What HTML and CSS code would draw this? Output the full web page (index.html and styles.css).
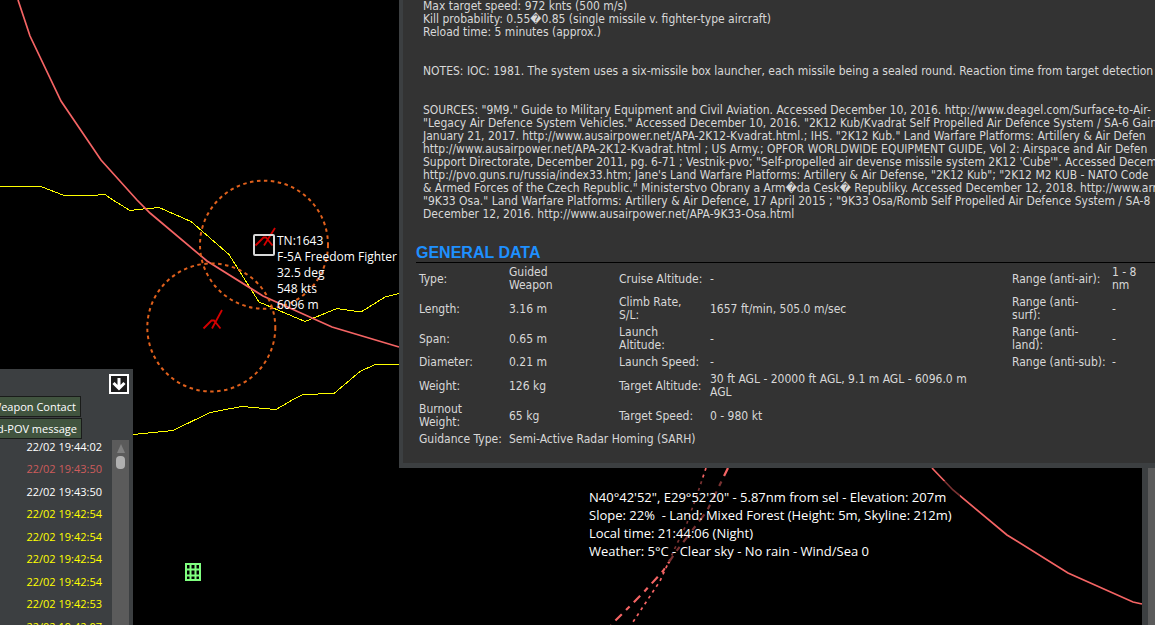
FILE: index.html
```html
<!DOCTYPE html>
<html lang="en">
<head>
<meta charset="utf-8">
<title>Tactical map</title>
<link rel="stylesheet" href="styles.css">
</head>
<body>
<main class="map">
  <svg class="chart" width="1155" height="625" viewBox="0 0 1155 625" aria-hidden="true">
    <g class="coast">
      <polyline points="0,186.5 41,186.5 64,195.5 91,195.5 105,194.5 113,200 130,210.5 143,209 159,207.5 191,221.5 229,254.5 259,302 305,321.5 337,308.5 361,312 385,297 399,293.5"/>
      <polyline points="133,434.5 173,430.5 209,413 220,410.5 242,406.5 276,409.5 294,399 303,394.5 334,393.5 360,371.5 375,364.5 399,364.5"/>
    </g>
    <g class="range">
      <polyline points="18,0 30,36 61,101 101,160 137,200 150,213 207,261 263,296 332,327 399,347"/>
      <polyline points="932,468 953,490 1007,535 1068,573 1133,602 1142,604"/>
      <polyline class="dash-long" points="728,468 707,511 675,553 663,571 643,593 611,625"/>
      <polyline class="dash-short" points="706,468 697,495 687,523 675,548 660,581 631,625"/>
    </g>
    <g class="ring">
      <circle cx="264" cy="244.7" r="64"/>
      <circle cx="211.300" cy="327.5" r="64"/>
    </g>
    <g class="launcher">
      <path d="M203.500 328.500L211.500 320.500H214L220.500 328.500M222 310L212 328.500"/>
      <path d="M255.500 245.500L263.500 237.500H266L272.500 245.500M275 228L264 245.500"/>
    </g>
    <rect class="select" x="254" y="235" width="20" height="20" rx="1"/>
    <path class="facility" d="M186 564H200V580H186ZM190.500 564V580M195.500 564V580M186 569.500H200M186 575.500H200"/>
  </svg>

  <div class="track">
    <div>TN:1643</div>
    <div>F-5A Freedom Fighter #1</div>
    <div>32.5 deg</div>
    <div>548 kts</div>
    <div>6096 m</div>
  </div>

  <div class="cursor-info">
    <div>N40°42'52", E29°52'20" - 5.87nm from sel - Elevation: 207m</div>
    <div>Slope: 22%&nbsp; - Land: Mixed Forest (Height: 5m, Skyline: 212m)</div>
    <div>Local time: 21:44:06 (Night)</div>
    <div>Weather: 5°C - Clear sky - No rain - Wind/Sea 0</div>
  </div>

  <div class="side-scroll"></div>

  <section class="log">
    <header class="log-head">
      <button class="collapse" type="button" aria-label="Collapse">
        <svg width="16" height="16" viewBox="0 0 16 16"><path d="M8 2V12M2.500 7L8 12.500L13.500 7"/></svg>
      </button>
    </header>
    <div class="filters">
      <button class="filter contact" type="button">Weapon Contact</button>
      <button class="filter" type="button">d-POV message</button>
    </div>
    <div class="log-body">
      <ul class="times">
        <li>22/02 19:44:02</li>
        <li class="alert">22/02 19:43:50</li>
        <li>22/02 19:43:50</li>
        <li class="notice">22/02 19:42:54</li>
        <li class="notice">22/02 19:42:54</li>
        <li class="notice">22/02 19:42:54</li>
        <li class="notice">22/02 19:42:54</li>
        <li class="notice">22/02 19:42:53</li>
        <li class="notice">22/02 19:42:07</li>
      </ul>
      <div class="scrollbar">
        <svg width="8" height="9" viewBox="0 0 8 9"><path d="M4 0L8 9H0Z"/></svg>
        <span class="thumb"></span>
      </div>
    </div>
  </section>

  <section class="database">
    <div class="notes">Max target speed: 972 knts (500 m/s)
Kill probability: 0.55&#xFFFD;0.85 (single missile v. fighter-type aircraft)
Reload time: 5 minutes (approx.)


NOTES: IOC: 1981. The system uses a six-missile box launcher, each missile being a sealed round. Reaction time from target detection


SOURCES: "9M9." Guide to Military Equipment and Civil Aviation. Accessed December 10, 2016. http://www.deagel.com/Surface-to-Air-
"Legacy Air Defence System Vehicles." Accessed December 10, 2016. "2K12 Kub/Kvadrat Self Propelled Air Defence System / SA-6 Gain
January 21, 2017. http://www.ausairpower.net/APA-2K12-Kvadrat.html.; IHS. "2K12 Kub." Land Warfare Platforms: Artillery &amp; Air Defen
http://www.ausairpower.net/APA-2K12-Kvadrat.html ; US Army.; OPFOR WORLDWIDE EQUIPMENT GUIDE, Vol 2: Airspace and Air Defen
Support Directorate, December 2011, pg. 6-71 ; Vestnik-pvo; "Self-propelled air devense missile system 2K12 'Cube'". Accessed Decem
http://pvo.guns.ru/russia/index33.htm; Jane's Land Warfare Platforms: Artillery &amp; Air Defense, "2K12 Kub"; "2K12 M2 KUB - NATO Code
&amp; Armed Forces of the Czech Republic." Ministerstvo Obrany a Arm&#xFFFD;da Cesk&#xFFFD; Republiky. Accessed December 12, 2018. http://www.arm
"9K33 Osa." Land Warfare Platforms: Artillery &amp; Air Defence, 17 April 2015 ; "9K33 Osa/Romb Self Propelled Air Defence System / SA-8
December 12, 2016. http://www.ausairpower.net/APA-9K33-Osa.html</div>
    <h2 class="heading">GENERAL DATA</h2>
    <table class="data">
      <colgroup><col class="c1"><col class="c2"><col class="c3"><col class="c4"><col class="c5"><col class="c6"></colgroup>
      <tbody>
        <tr><th>Type:</th><td>Guided<br>Weapon</td><th>Cruise Altitude:</th><td>-</td><th>Range (anti-air):</th><td>1 - 8<br>nm</td></tr>
        <tr><th>Length:</th><td>3.16 m</td><th>Climb Rate,<br>S/L:</th><td>1657 ft/min, 505.0 m/sec</td><th>Range (anti-<br>surf):</th><td>-</td></tr>
        <tr><th>Span:</th><td>0.65 m</td><th>Launch<br>Altitude:</th><td>-</td><th>Range (anti-<br>land):</th><td>-</td></tr>
        <tr><th>Diameter:</th><td>0.21 m</td><th>Launch Speed:</th><td>-</td><th>Range (anti-sub):</th><td>-</td></tr>
        <tr><th>Weight:</th><td>126 kg</td><th>Target Altitude:</th><td>30 ft AGL - 20000 ft AGL, 9.1 m AGL - 6096.0 m<br>AGL</td><th></th><td></td></tr>
        <tr><th>Burnout<br>Weight:</th><td>65 kg</td><th>Target Speed:</th><td>0 - 980 kt</td><th></th><td></td></tr>
        <tr><th>Guidance Type:</th><td colspan="5">Semi-Active Radar Homing (SARH)</td></tr>
      </tbody>
    </table>
  </section>
</main>
</body>
</html>
```
FILE: styles.css
```css
* { box-sizing: border-box; }

body {
  margin: 0;
  background: #000;
  color: #fff;
  font-family: "Open Sans", "Noto Sans", sans-serif;
}

.map {
  position: relative;
  min-height: 100vh;
  overflow: hidden;
}

/* Chart drawing */
.chart {
  display: block;
  fill: none;
}

.coast { stroke: #ffff00; stroke-width: 1; shape-rendering: crispEdges; }
.range { stroke: #f46464; stroke-width: 1.7; }
.dash-long { stroke-width: 2.2; stroke-dasharray: 9 6 5 6; }
.dash-short { stroke-dasharray: 3 4; }
.ring { stroke: #e0601c; stroke-width: 2; stroke-dasharray: 3.5 3.5; }
.launcher { stroke: #d40000; stroke-width: 1.8; }
.select { stroke: #d8d8d8; stroke-width: 2; }
.facility { stroke: #80ff80; stroke-width: 2; }

.track {
  position: absolute;
  left: 277px;
  top: 233px;
  font-size: 12px;
  line-height: 16px;
  white-space: nowrap;
}

.cursor-info {
  position: absolute;
  left: 584px;
  top: 481px;
  padding: 7px 8px 2px 5px;
  background: rgba(0, 0, 0, 0.5);
  font-size: 13px;
  line-height: 18px;
  white-space: nowrap;
}

.side-scroll {
  position: absolute;
  right: 0;
  top: 0;
  bottom: 0;
  width: 13px;
  border-left: 6px solid #3c3f41;
  background: #5b5b5b;
}

/* Message log */
.log {
  position: absolute;
  left: 0;
  top: 369px;
  bottom: 0;
  width: 133px;
  display: flex;
  flex-direction: column;
  overflow: hidden;
  background: #3c3f41;
}

.log-head {
  display: flex;
  justify-content: flex-end;
  padding: 5px 4px 2px;
}

.collapse {
  display: block;
  width: 20px;
  height: 20px;
  padding: 0;
  border: 2px solid #fff;
  background: #1c1c1c;
}

.collapse svg {
  display: block;
  fill: none;
  stroke: #fff;
  stroke-width: 3;
}

.filters {
  display: flex;
  flex-direction: column;
  align-items: flex-start;
  gap: 1px;
}

.filter {
  height: 21px;
  margin-left: -10px;
  padding: 0 4px 0 6px;
  border: 1px solid #1a1c1a;
  background: #41543f;
  color: #fff;
  font: 11px/16px "Open Sans", "Noto Sans", sans-serif;
  white-space: nowrap;
}

.contact { margin-left: -16px; }

.log-body {
  display: flex;
  flex: 1;
  min-height: 0;
  padding-right: 4px;
}

.times {
  display: grid;
  grid-auto-rows: 22px 23px;
  align-items: center;
  align-content: start;
  flex: 1;
  margin: -4px 0 0;
  padding: 0 10px 0 0;
  list-style: none;
  text-align: right;
  font-size: 11px;
  white-space: nowrap;
}

.alert { color: #cd5c5c; }
.notice { color: #ffff00; }

.scrollbar {
  display: flex;
  flex-direction: column;
  align-items: center;
  gap: 3px;
  width: 17px;
  padding-top: 4px;
  margin-top: 1px;
  background: #5b5b5b;
}

.scrollbar svg { fill: #808080; }

.thumb {
  width: 9px;
  height: 13px;
  border-radius: 4px;
  background: #b0b0b0;
}

/* Database window */
.database {
  position: absolute;
  left: 399px;
  right: 0;
  top: 0;
  padding-bottom: 14px;
  overflow: hidden;
  border: solid #3c3f41;
  border-width: 0 0 5px 4px;
  background: #333;
  color: #d8d8d8;
  font: 12px/13px "DejaVu Sans Condensed", "DejaVu Sans", sans-serif;
}

.notes {
  padding-left: 20px;
  white-space: pre;
}

.heading {
  margin: 22px 0 0 13px;
  border-bottom: 1px solid #000;
  color: #1e90ff;
  font: bold 16px/19px "Liberation Sans", Arial, sans-serif;
}

.data {
  width: calc(100% - 13px);
  margin-left: 13px;
  table-layout: fixed;
  border-spacing: 2px;
  white-space: nowrap;
}

.data th,
.data td {
  padding: 1px;
  font-weight: normal;
  text-align: left;
}

.c1 { width: 88px; }
.c2 { width: 108px; }
.c3 { width: 89px; }
.c5 { width: 98px; }
.c6 { width: 42px; }
```
